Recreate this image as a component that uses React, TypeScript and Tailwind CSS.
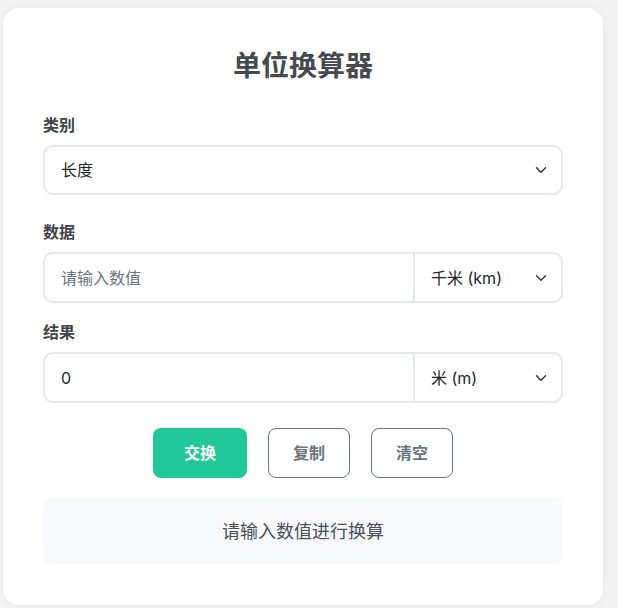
import React from "react";

const font = { fontFamily: '"Inter", "Noto Sans CJK SC", sans-serif' };

function Chevron() {
  return (
    <svg viewBox="0 0 16 16" className="w-3 h-3 shrink-0" aria-hidden="true">
      <path
        fill="none"
        stroke="#343a40"
        strokeLinecap="round"
        strokeLinejoin="round"
        strokeWidth="2"
        d="m2 5 6 6 6-6"
      />
    </svg>
  );
}

function UnitSelect({ label }: { label: string }) {
  return (
    <div className="w-[148px] shrink-0 border-l-2 border-[#e5e9ee] flex items-center justify-between pl-4 pr-[14px]">
      <span className="text-[16px] text-[#212529]">{label}</span>
      <Chevron />
    </div>
  );
}

export default function App() {
  return (
    <div className="min-h-screen bg-[#f4f4f4] pt-2" style={font}>
      <div className="ml-[3px] w-[600px] h-[597px] rounded-2xl bg-white shadow-[0_0_12px_rgba(0,0,0,0.06)] px-10 pt-10">
        <h1 className="text-center text-[28px] leading-[36px] font-bold text-[#464a4f]">
          单位换算器
        </h1>

        <div className="mt-[30px] text-[16px] leading-[22px] font-semibold text-[#3f4449]">类别</div>
        <div className="mt-[9px] h-[50px] rounded-[10px] border-2 border-[#e5e9ee] flex items-center justify-between pl-4 pr-[14px]">
          <span className="text-[16px] text-[#212529]">长度</span>
          <Chevron />
        </div>

        <div className="mt-[26px] text-[16px] leading-[22px] font-semibold text-[#3f4449]">数据</div>
        <div className="mt-[9px] h-[51px] rounded-[10px] border-2 border-[#e5e9ee] flex">
          <input
            className="flex-1 min-w-0 bg-transparent outline-none pl-4 text-[16px] text-[#212529] placeholder:text-[#6c757d]"
            placeholder="请输入数值"
            style={font}
          />
          <UnitSelect label="千米 (km)" />
        </div>

        <div className="mt-[18px] text-[16px] leading-[22px] font-semibold text-[#3f4449]">结果</div>
        <div className="mt-[9px] h-[51px] rounded-[10px] border-2 border-[#e5e9ee] flex">
          <div className="flex-1 flex items-center pl-4 text-[16px] text-[#212529]">0</div>
          <UnitSelect label="米 (m)" />
        </div>

        <div className="mt-[25px] flex justify-center gap-[21px]">
          <button className="w-[94px] h-[50px] rounded-lg bg-[#20c997] text-white text-[16px] font-semibold">
            交换
          </button>
          <button className="w-[82px] h-[50px] rounded-lg border border-[#6c757d] bg-white text-[#6c757d] text-[16px] font-semibold">
            复制
          </button>
          <button className="w-[82px] h-[50px] rounded-lg border border-[#6c757d] bg-white text-[#6c757d] text-[16px] font-semibold">
            清空
          </button>
        </div>

        <div className="mt-5 h-[66px] rounded-lg bg-[#f8f9fa] flex items-center justify-center text-[18px] text-[#495057]">
          请输入数值进行换算
        </div>
      </div>
    </div>
  );
}
